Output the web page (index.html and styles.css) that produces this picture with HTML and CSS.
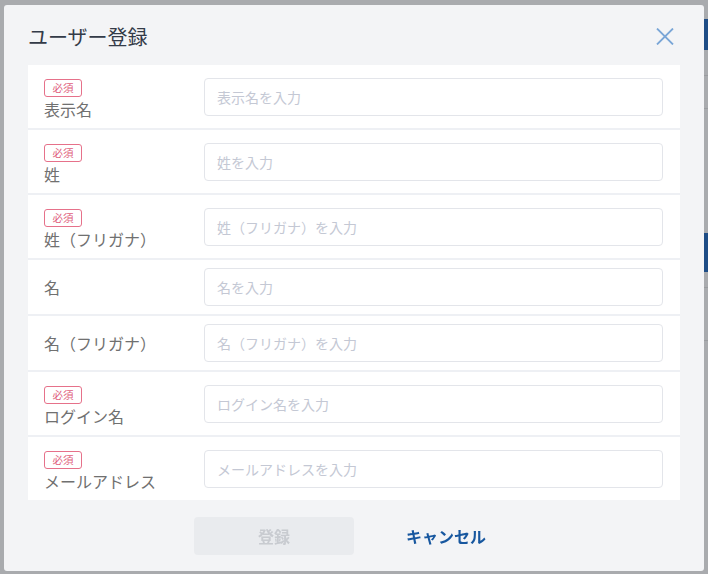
FILE: index.html
```html
<!DOCTYPE html>
<html lang="ja">
<head>
<meta charset="utf-8">
<title>ユーザー登録</title>
<link rel="stylesheet" href="styles.css">
</head>
<body>
<div class="modal" role="dialog" aria-label="ユーザー登録">
  <div class="modal-header">
    <h2 class="modal-title">ユーザー登録</h2>
    <button class="close-btn" aria-label="閉じる">
      <svg width="18" height="17" viewBox="0 0 18 17"><path d="M1 0.5 L17 16.5 M17 0.5 L1 16.5" stroke="#7aa6d7" stroke-width="1.8" fill="none"/></svg>
    </button>
  </div>
  <div class="form-box">
    <div class="row">
      <div class="label req"><span class="badge">必須</span><span class="label-text">表示名</span></div>
      <input class="field" placeholder="表示名を入力">
    </div>
    <div class="row">
      <div class="label req"><span class="badge">必須</span><span class="label-text">姓</span></div>
      <input class="field" placeholder="姓を入力">
    </div>
    <div class="row">
      <div class="label req"><span class="badge">必須</span><span class="label-text">姓（フリガナ）</span></div>
      <input class="field" placeholder="姓（フリガナ）を入力">
    </div>
    <div class="row">
      <div class="label"><span class="label-text">名</span></div>
      <input class="field" placeholder="名を入力">
    </div>
    <div class="row">
      <div class="label"><span class="label-text">名（フリガナ）</span></div>
      <input class="field" placeholder="名（フリガナ）を入力">
    </div>
    <div class="row">
      <div class="label req"><span class="badge">必須</span><span class="label-text">ログイン名</span></div>
      <input class="field" placeholder="ログイン名を入力">
    </div>
    <div class="row">
      <div class="label req"><span class="badge">必須</span><span class="label-text">メールアドレス</span></div>
      <input class="field" placeholder="メールアドレスを入力">
    </div>
  </div>
  <div class="modal-footer">
    <button class="btn btn-primary" disabled>登録</button>
    <button class="btn btn-link">キャンセル</button>
  </div>
</div>
</body>
</html>
```
FILE: styles.css
```css
* { box-sizing: border-box; }
html, body { margin: 0; padding: 0; }
body {
  width: 708px;
  height: 574px;
  overflow: hidden;
  font-family: "Noto Sans CJK JP", "Noto Sans", sans-serif;
  background:
    linear-gradient(#1e4d86, #1e4d86) right 0 top 19px / 4px 31px no-repeat,
    linear-gradient(#1e4d86, #1e4d86) right 0 top 233px / 4px 39px no-repeat,
    linear-gradient(#9a9c9f, #9a9c9f) right 0 top 75px / 4px 1px no-repeat,
    linear-gradient(#9a9c9f, #9a9c9f) right 0 top 108px / 4px 1px no-repeat,
    linear-gradient(#9a9c9f, #9a9c9f) right 0 top 287px / 4px 1px no-repeat,
    linear-gradient(#9a9c9f, #9a9c9f) right 0 top 340px / 4px 1px no-repeat,
    #a9abae;
}
.modal {
  position: fixed;
  left: 4px;
  top: 5px;
  width: 700px;
  height: 566px;
  background: #f3f4f6;
  border-radius: 3px;
  display: flex;
  flex-direction: column;
}
.modal-header {
  height: 60px;
  display: flex;
  align-items: center;
  justify-content: space-between;
  padding: 3px 30px 0 24px;
}
.modal-title {
  margin: 0;
  font-size: 20px;
  font-weight: 400;
  color: #333b48;
}
.close-btn {
  border: 0;
  background: transparent;
  padding: 0;
  width: 18px;
  height: 17px;
  display: flex;
  cursor: pointer;
}
.form-box {
  margin: 0 24px;
  background: #ffffff;
}
.row {
  display: flex;
  align-items: center;
  padding: 8px 17px 8px 16px;
  border-bottom: 2px solid #eef0f4;
}
.row:last-child { border-bottom: 0; }
.label {
  width: 160px;
  flex: none;
  display: flex;
  flex-direction: column;
  align-items: flex-start;
}
.label.req { padding-top: 6px; }
.label.req .label-text { line-height: 22px; }
.badge {
  width: 38px;
  height: 18px;
  border: 1px solid #e6718a;
  border-radius: 3px;
  color: #e0607c;
  font-size: 10.5px;
  line-height: 16px;
  text-align: center;
  margin-bottom: 1px;
}
.label-text {
  font-size: 16px;
  line-height: 24px;
  color: #707070;
}
.field {
  flex: 1;
  height: 38px;
  border: 1px solid #e3e5ea;
  border-radius: 4px;
  padding: 0 12px;
  font-family: inherit;
  font-size: 14px;
  color: #333;
  background: #fff;
  outline: none;
}
.field::placeholder { color: #c4c8d4; }
.modal-footer {
  flex: 1;
  display: flex;
  align-items: center;
  justify-content: center;
  gap: 12px;
  padding: 0 0 0 12px;
}
.btn {
  width: 160px;
  height: 38px;
  border: 0;
  border-radius: 4px;
  font-family: inherit;
  font-size: 16px;
  font-weight: 700;
  background: transparent;
}
.btn-primary {
  background: #e9ebee;
  color: #c8cbd0;
}
.btn-link {
  color: #17579f;
  cursor: pointer;
}
```
